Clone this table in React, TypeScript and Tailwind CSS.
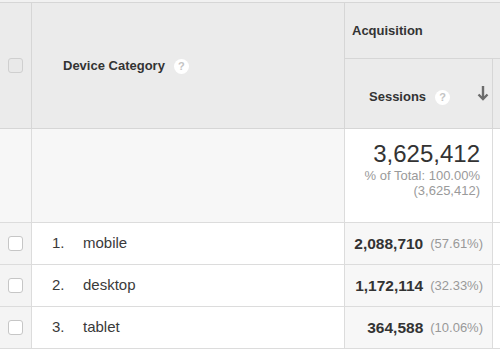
import React from 'react';

const rows = [
  { n: 1, name: 'mobile', value: '2,088,710', pct: '(57.61%)' },
  { n: 2, name: 'desktop', value: '1,172,114', pct: '(32.33%)' },
  { n: 3, name: 'tablet', value: '364,588', pct: '(10.06%)' },
];

function Help() {
  return (
    <span className="inline-flex h-[15px] w-[15px] items-center justify-center rounded-full bg-white text-[11px] font-bold leading-none text-[#c4c4c4]">
      ?
    </span>
  );
}

function Checkbox({ header }: { header?: boolean }) {
  return (
    <span
      className={
        header
          ? 'block h-[15px] w-[15px] rounded-[3px] border border-[#cfcfcf] bg-[#e9e9e9]'
          : 'block h-[15px] w-[15px] rounded-[3px] border border-[#c6c6c6] bg-white'
      }
    />
  );
}

export default function App() {
  return (
    <div className="h-[360px] w-[500px] overflow-hidden bg-white font-['Liberation_Sans',Arial,sans-serif] text-[#333]">
      <div className="h-[2px] bg-[#f1f1f1]" />

      {/* header */}
      <div className="flex h-[127px] border-y border-[#d6d6d6] bg-[#ebebeb]">
        <div className="flex w-[32px] shrink-0 items-center justify-center border-r border-[#d6d6d6]">
          <Checkbox header />
        </div>
        <div className="flex w-[313px] shrink-0 items-center border-r border-[#d6d6d6] pl-[31px] text-[13px] font-bold">
          Device Category
          <span className="ml-[9px]">
            <Help />
          </span>
        </div>
        <div className="flex flex-1 flex-col">
          <div className="flex h-[56px] items-center border-b border-[#d6d6d6] pl-[7px] text-[13px] font-bold">
            Acquisition
          </div>
          <div className="flex flex-1">
            <div className="flex w-[148px] items-center border-r border-[#d6d6d6] pl-[24px] pt-[6px] text-[13px] font-bold">
              Sessions
              <span className="ml-[9px]">
                <Help />
              </span>
              <svg
                viewBox="0 0 12 16"
                className="mb-[8px] ml-auto mr-[3px] h-[16px] w-[12px]"
                fill="none"
                stroke="#6c6c6c"
                strokeWidth="2.4"
              >
                <path d="M6 1v13" />
                <path d="M1.5 9.5L6 14l4.5-4.5" />
              </svg>
            </div>
          </div>
        </div>
      </div>

      {/* totals */}
      <div className="flex h-[94px] border-b border-[#dcdcdc]">
        <div className="w-[32px] shrink-0 border-r border-[#dcdcdc] bg-[#f7f7f7]" />
        <div className="w-[313px] shrink-0 border-r border-[#dcdcdc] bg-[#f7f7f7]" />
        <div className="flex w-[148px] flex-col items-end border-r border-[#dcdcdc] bg-white pr-[12px] pt-[11px] text-right">
          <div className="text-[24px] leading-[28px] text-[#333]">3,625,412</div>
          <div className="text-[13px] leading-[15px] text-[#9a9a9a]">% of Total: 100.00%</div>
          <div className="text-[13px] leading-[15px] text-[#9a9a9a]">(3,625,412)</div>
        </div>
      </div>

      {/* data rows */}
      {rows.map((r) => (
        <div key={r.n} className="flex h-[42px] border-b border-[#dcdcdc]">
          <div className="flex w-[32px] shrink-0 items-center justify-center border-r border-[#dcdcdc] bg-[#f4f4f4]">
            <Checkbox />
          </div>
          <div className="flex w-[313px] shrink-0 items-center border-r border-[#dcdcdc] pl-[20px] text-[15px] text-[#3a3a3a]">
            <span className="w-[31px]">{r.n}.</span>
            <span>{r.name}</span>
          </div>
          <div className="flex w-[148px] items-center justify-end border-r border-[#dcdcdc] bg-[#f7f7f7] pr-[9px]">
            <span className="text-[15.5px] font-bold text-[#333]">{r.value}</span>
            <span className="ml-[7px] text-[13px] text-[#999]">{r.pct}</span>
          </div>
        </div>
      ))}
    </div>
  );
}
